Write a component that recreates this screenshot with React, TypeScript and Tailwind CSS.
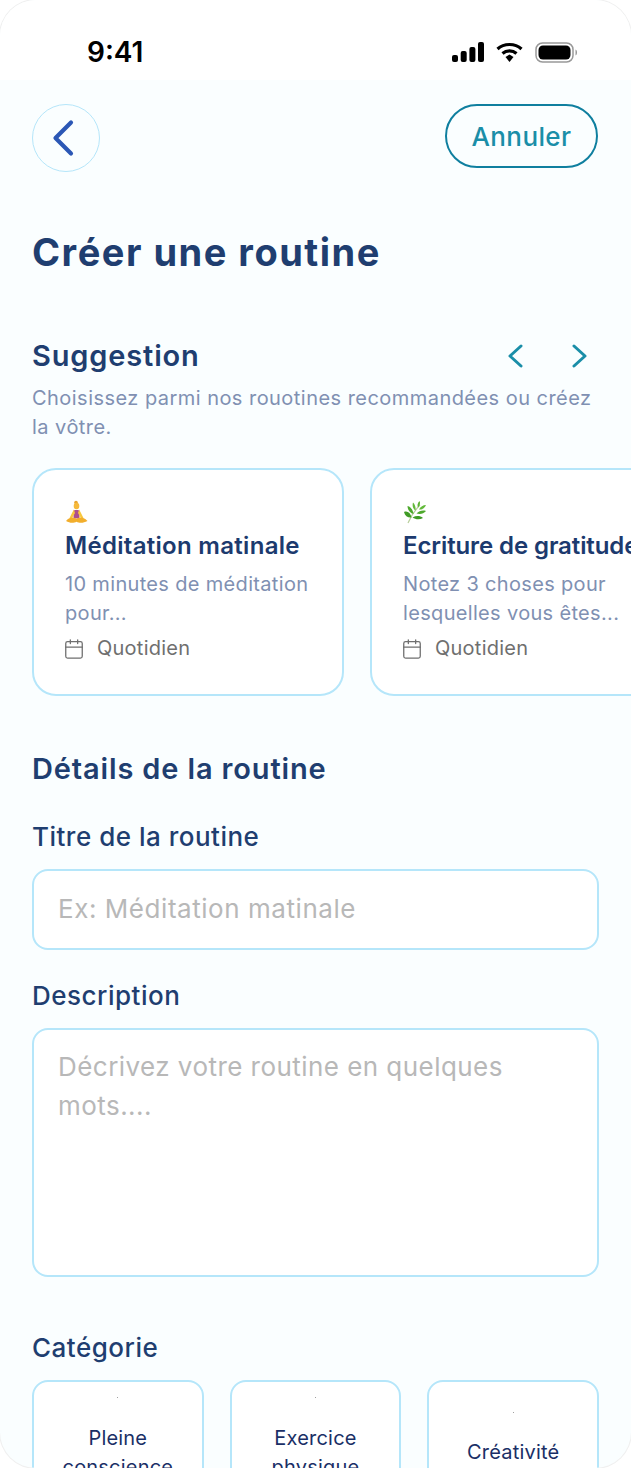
import { Calendar } from "lucide-react";

const font = "font-['Inter','Liberation_Sans',sans-serif]";

function MeditationEmoji() {
  return (
    <svg width="24" height="26" viewBox="0 0 24 26" aria-hidden="true">
      <circle cx="11" cy="3.5" r="1.8" fill="#e9a42c" />
      <ellipse cx="11.5" cy="7" rx="2.8" ry="3.2" fill="#f6b93b" />
      <rect x="8.5" y="11" width="6" height="8.5" rx="1.5" fill="#ad4f8e" />
      <path d="M8.8 10.5 L4.5 19 L6.5 20 L10 14 Z M14.2 10.5 L18.5 19 L16.5 20 L13 14 Z" fill="#f8c83f" />
      <path d="M1 22 C5 17.5 9 18 11.5 20 C14 18 18 17.5 22.5 22 C18 24.5 14 24 11.5 22.7 C9 24 5 24.5 1 22 Z" fill="#f2ae2c" />
    </svg>
  );
}

function HerbEmoji() {
  return (
    <svg width="24" height="26" viewBox="0 0 24 26" aria-hidden="true">
      <path d="M5 24 C8 17 12 11 17 6" stroke="#b8cf9c" strokeWidth="1.2" fill="none" />
      <path d="M1 13 C4.5 11.5 7.5 14 8.5 18.5 C5 19 2 17 1 13 Z" fill="#3f9b25" />
      <path d="M4.5 7 C8 8 10 11 10.5 15 C7 14 4.5 11 4.5 7 Z" fill="#4da92c" />
      <path d="M10 3.5 C12 5.5 13 8.5 12.5 11.5 C10 10 9 6.5 10 3.5 Z" fill="#63b93a" />
      <path d="M16.5 2 C17.5 4 17 6.5 15 8.5 C14 6.5 14.5 4 16.5 2 Z" fill="#5cb334" />
      <path d="M23 6 C22 9 19 11 16 10.5 C17.5 7.5 20 6 23 6 Z" fill="#63b93a" />
      <path d="M23 12 C20.5 15 17 15.5 13.5 14.5 C16 12 19.5 11 23 12 Z" fill="#4da92c" />
      <path d="M20 19 C16.5 21 12.5 20.5 9.5 18.5 C13 16.5 17 16.5 20 19 Z" fill="#3f9b25" />
    </svg>
  );
}

function SuggestionCard({
  emoji,
  title,
  titleTracking,
  lines,
}: {
  emoji: React.ReactNode;
  title: string;
  titleTracking: string;
  lines: string[];
}) {
  return (
    <div className="h-[228px] w-[312px] shrink-0 rounded-[24px] border-2 border-[#b5e6fa] bg-white pl-[31px] pt-[29px]">
      <div className="h-[26px]">{emoji}</div>
      <p className={`mt-[4px] whitespace-nowrap text-[24px] leading-[34px] font-semibold text-[#1c3a6e] ${titleTracking}`}>
        {title}
      </p>
      <p className="mt-[7px] whitespace-nowrap text-[20px] leading-[29px] tracking-[0.33px] text-[#8090b2]">
        {lines[0]}
        <br />
        {lines[1]}
      </p>
      <div className="mt-[6px] flex items-center gap-[12px] text-[#6f6f6f]">
        <Calendar size={22} strokeWidth={1.4} className="-ml-[2px]" />
        <span className="text-[20px] leading-[29px] tracking-[0.25px]">Quotidien</span>
      </div>
    </div>
  );
}

function CategoryCard({ label, dotTop }: { label: string[]; dotTop: string }) {
  return (
    <div className="h-[120px] rounded-[16px] border-2 border-[#b5e6fa] bg-white text-center">
      <div className={`mx-auto h-px w-px bg-[#a0a0a0] ${dotTop}`} />
      <p className="text-[20px] leading-[29px] tracking-[0.2px] text-[#1a2f66]">
        {label.map((l) => (
          <span key={l} className="block">
            {l}
          </span>
        ))}
      </p>
    </div>
  );
}

export default function App() {
  return (
    <div className={`h-[1468px] w-[631px] overflow-hidden bg-white ${font}`}>
      <div className="h-full overflow-hidden rounded-[36px] bg-[#fafeff] shadow-[0_0_0_1px_#f0f0f0]">
        {/* Status bar */}
        <div className="flex h-[80px] items-center justify-between bg-white pl-[87px] pr-[53px] pt-[24px]">
          <span className="text-[28px] font-semibold leading-none text-black">9:41</span>
          <div className="flex items-center gap-[12px]">
            <svg width="32" height="20" viewBox="0 0 32 20" aria-hidden="true">
              <rect x="0" y="13" width="6" height="7" rx="2" fill="#000" />
              <rect x="8.7" y="9" width="6" height="11" rx="2" fill="#000" />
              <rect x="17.4" y="5" width="6" height="15" rx="2" fill="#000" />
              <rect x="26" y="0" width="6" height="20" rx="2" fill="#000" />
            </svg>
            <svg width="27" height="20" viewBox="0 0 27 20" aria-hidden="true">
              <path d="M1.5 7 C8 1 19 1 25.5 7" stroke="#000" strokeWidth="3.2" fill="none" />
              <path d="M6.5 11.5 C10.5 8 16.5 8 20.5 11.5" stroke="#000" strokeWidth="3.2" fill="none" />
              <path d="M9.5 15 L13.5 12.5 L17.5 15 L13.5 20 Z" fill="#000" />
            </svg>
            <svg width="43" height="21" viewBox="0 0 43 21" aria-hidden="true">
              <rect x="1" y="1" width="37" height="19" rx="6.5" fill="none" stroke="#999" strokeWidth="1.5" />
              <rect x="3.5" y="3.5" width="32" height="14" rx="4.5" fill="#000" />
              <path d="M40.5 7.5 C42.5 8 42.5 13 40.5 13.5 Z" fill="#999" />
            </svg>
          </div>
        </div>

        <div className="px-[32px]">
          {/* Top actions */}
          <div className="flex items-start justify-between pt-[24px]">
            <button className="flex h-[68px] w-[68px] items-center justify-center rounded-full border border-[#b5e6fa]">
              <svg width="24" height="38" viewBox="0 0 24 38" className="mr-[6px]" aria-hidden="true">
                <path d="M20 3.5 L4.5 19 L20 34.5" stroke="#2b57b5" strokeWidth="4.2" strokeLinecap="round" strokeLinejoin="round" fill="none" />
              </svg>
            </button>
            <button className="mr-[1px] h-[64px] w-[153px] rounded-full border-2 border-[#0f7f9f] text-[26px] font-medium tracking-[0.4px] text-[#1a8ea8]">
              Annuler
            </button>
          </div>

          <h1 className="mt-[53px] text-[38px] leading-[54px] font-bold tracking-[1.5px] text-[#1f3e70]">
            Créer une routine
          </h1>

          {/* Suggestion */}
          <div className="mt-[56px] flex items-center justify-between">
            <h2 className="text-[29px] leading-[42px] font-semibold tracking-[0.85px] text-[#1f3e70]">
              Suggestion
            </h2>
            <div className="flex gap-[49px] pr-[11px]">
              <svg width="16" height="24" viewBox="0 0 16 24" className="-mt-[1px]" aria-hidden="true">
                <path d="M14 2 L3 12 L14 22" stroke="#1a8ea8" strokeWidth="3" strokeLinecap="round" strokeLinejoin="round" fill="none" />
              </svg>
              <svg width="16" height="24" viewBox="0 0 16 24" className="-mt-[1px]" aria-hidden="true">
                <path d="M2 2 L13 12 L2 22" stroke="#1a8ea8" strokeWidth="3" strokeLinecap="round" strokeLinejoin="round" fill="none" />
              </svg>
            </div>
          </div>
          <p className="mt-[7px] text-[20px] leading-[29px] tracking-[0.46px] text-[#8090b2]">
            Choisissez parmi nos rouotines recommandées ou créez la vôtre.
          </p>

          {/* Cards */}
          <div className="mt-[26px] -mr-[32px] flex gap-[26px] overflow-hidden">
            <SuggestionCard
              emoji={<MeditationEmoji />}
              title="Méditation matinale"
              titleTracking="tracking-[0.3px]"
              lines={["10 minutes de méditation", "pour..."]}
            />
            <SuggestionCard
              emoji={<HerbEmoji />}
              title="Ecriture de gratitude"
              titleTracking="tracking-[-0.1px]"
              lines={["Notez 3 choses pour", "lesquelles vous êtes..."]}
            />
          </div>

          {/* Details */}
          <h2 className="mt-[52px] text-[29px] leading-[42px] font-semibold tracking-[0.85px] text-[#1f3e70]">
            Détails de la routine
          </h2>
          <label className="mt-[28px] block text-[26px] leading-[37px] font-medium tracking-[0.5px] text-[#1f3e70]">
            Titre de la routine
          </label>
          <div className="mt-[14px] flex h-[81px] items-center rounded-[16px] border-2 border-[#b5e6fa] bg-white px-[24px] pb-[2px] text-[26px] tracking-[0.55px] text-[#b8b8b8]">
            Ex: Méditation matinale
          </div>
          <label className="mt-[27px] block text-[26px] leading-[37px] font-medium tracking-[0.5px] text-[#1f3e70]">
            Description
          </label>
          <div className="mt-[14px] h-[249px] rounded-[16px] border-2 border-[#b5e6fa] bg-white px-[24px] pt-[17px] text-[26px] leading-[39px] tracking-[0.45px] text-[#b8b8b8]">
            Décrivez votre routine en quelques mots....
          </div>

          {/* Category */}
          <label className="mt-[52px] block text-[26px] leading-[37px] font-medium tracking-[0.5px] text-[#1f3e70]">
            Catégorie
          </label>
          <div className="mt-[14px] grid grid-cols-3 gap-[26px]">
            <CategoryCard label={["Pleine", "conscience"]} dotTop="mt-[15px] mb-[26px]" />
            <CategoryCard label={["Exercice", "physique"]} dotTop="mt-[15px] mb-[26px]" />
            <CategoryCard label={["Créativité"]} dotTop="mt-[30px] mb-[25px]" />
          </div>
        </div>
      </div>
    </div>
  );
}
